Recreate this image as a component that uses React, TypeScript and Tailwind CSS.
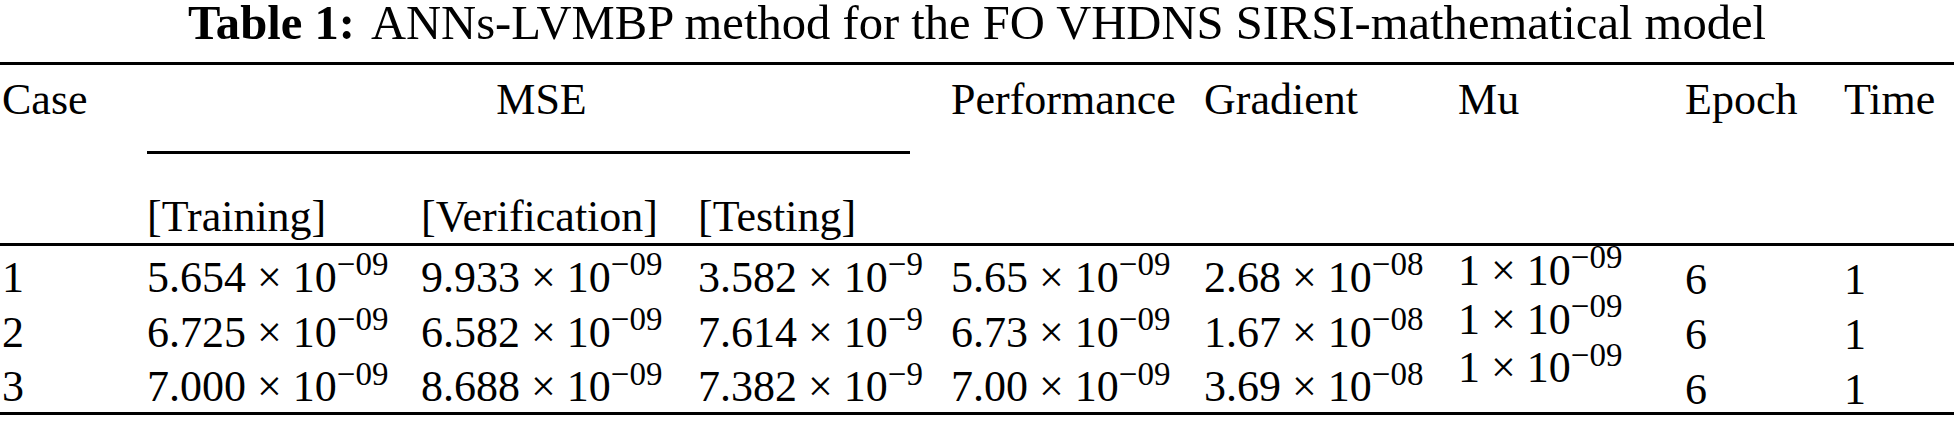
import React from 'react';

type Sci = { m: string; e: string };

interface Row {
  id: string;
  training: Sci;
  verification: Sci;
  testing: Sci;
  performance: Sci;
  gradient: Sci;
  mu: Sci;
  epoch: string;
  time: string;
}

const rows: Row[] = [
  {
    id: '1',
    training: { m: '5.654', e: '09' },
    verification: { m: '9.933', e: '09' },
    testing: { m: '3.582', e: '9' },
    performance: { m: '5.65', e: '09' },
    gradient: { m: '2.68', e: '08' },
    mu: { m: '1', e: '09' },
    epoch: '6',
    time: '1',
  },
  {
    id: '2',
    training: { m: '6.725', e: '09' },
    verification: { m: '6.582', e: '09' },
    testing: { m: '7.614', e: '9' },
    performance: { m: '6.73', e: '09' },
    gradient: { m: '1.67', e: '08' },
    mu: { m: '1', e: '09' },
    epoch: '6',
    time: '1',
  },
  {
    id: '3',
    training: { m: '7.000', e: '09' },
    verification: { m: '8.688', e: '09' },
    testing: { m: '7.382', e: '9' },
    performance: { m: '7.00', e: '09' },
    gradient: { m: '3.69', e: '08' },
    mu: { m: '1', e: '09' },
    epoch: '6',
    time: '1',
  },
];

const rowHeight = ['h-[53px]', 'h-[55px]', 'h-[61px]'];
const rowPad = ['', '', 'pb-[5px]'];
// the Mu column sits higher in every row, epoch/time a touch lower
const muLift = ['-mt-[7px] pb-[7px]', '-mt-[13px] pb-[13px]', '-mt-[19px] pb-[19px]'];
const lowDrop = ['pt-[2px] -mb-[2px]', 'pt-[2px] -mb-[2px]', 'pt-[3px] -mb-[3px]'];

const Num = ({ v }: { v: Sci }) => (
  <span>
    {v.m} × 10<sup>−{v.e}</sup>
  </span>
);

const App = () => {
  return (
    <div className="w-[1954px] h-[425px] bg-white text-black font-[family-name:'Liberation_Serif','Times_New_Roman',serif] overflow-hidden">
      <div className="text-center text-[48.6px] leading-[46px] whitespace-nowrap">
        <span className="font-bold">Table 1:</span>
        <span className="pl-[16px]">ANNs-LVMBP method for the FO VHDNS SIRSI-mathematical model</span>
      </div>

      <table className="mt-[16px] w-full table-fixed border-collapse text-[44px]">
        <colgroup>
          <col className="w-[147px]" />
          <col className="w-[274px]" />
          <col className="w-[277px]" />
          <col className="w-[253px]" />
          <col className="w-[253px]" />
          <col className="w-[254px]" />
          <col className="w-[227px]" />
          <col className="w-[159px]" />
          <col />
        </colgroup>
        <thead className="leading-[49px]">
          <tr className="border-t-[3px] border-black">
            <th rowSpan={2} className="align-top pt-[10px] pl-[2px] text-left font-normal">Case</th>
            <th colSpan={3} className="align-top pt-[10px] text-left font-normal">
              <div className="mr-[41px] border-b-[3px] border-black pb-[27px] pl-[26px] text-center">MSE</div>
            </th>
            <th rowSpan={2} className="align-top pt-[10px] text-left font-normal">Performance</th>
            <th rowSpan={2} className="align-top pt-[10px] text-left font-normal">Gradient</th>
            <th rowSpan={2} className="align-top pt-[10px] text-left font-normal">Mu</th>
            <th rowSpan={2} className="align-top pt-[10px] text-left font-normal">Epoch</th>
            <th rowSpan={2} className="align-top pt-[10px] text-left font-normal">Time</th>
          </tr>
          <tr className="border-b-[3px] border-black">
            <th className="pt-[38px] pb-[2px] text-left font-normal">[Training]</th>
            <th className="pt-[38px] pb-[2px] text-left font-normal">[Verification]</th>
            <th className="pt-[38px] pb-[2px] text-left font-normal">[Testing]</th>
          </tr>
        </thead>
        <tbody className="border-b-[3px] border-black leading-[40px]">
          {rows.map((r, i) => (
            <tr key={r.id} className={rowHeight[i]}>
              <td className={`align-bottom p-0 pl-[2px] ${rowPad[i]}`}>{r.id}</td>
              <td className={`align-bottom p-0 ${rowPad[i]}`}><Num v={r.training} /></td>
              <td className={`align-bottom p-0 ${rowPad[i]}`}><Num v={r.verification} /></td>
              <td className={`align-bottom p-0 ${rowPad[i]}`}><Num v={r.testing} /></td>
              <td className={`align-bottom p-0 ${rowPad[i]}`}><Num v={r.performance} /></td>
              <td className={`align-bottom p-0 ${rowPad[i]}`}><Num v={r.gradient} /></td>
              <td className={`align-bottom p-0 ${rowPad[i]}`}>
                <div className={muLift[i]}><Num v={r.mu} /></div>
              </td>
              <td className={`align-bottom p-0 ${rowPad[i]}`}>
                <div className={lowDrop[i]}>{r.epoch}</div>
              </td>
              <td className={`align-bottom p-0 ${rowPad[i]}`}>
                <div className={lowDrop[i]}>{r.time}</div>
              </td>
            </tr>
          ))}
        </tbody>
      </table>
    </div>
  );
};

export default App;
